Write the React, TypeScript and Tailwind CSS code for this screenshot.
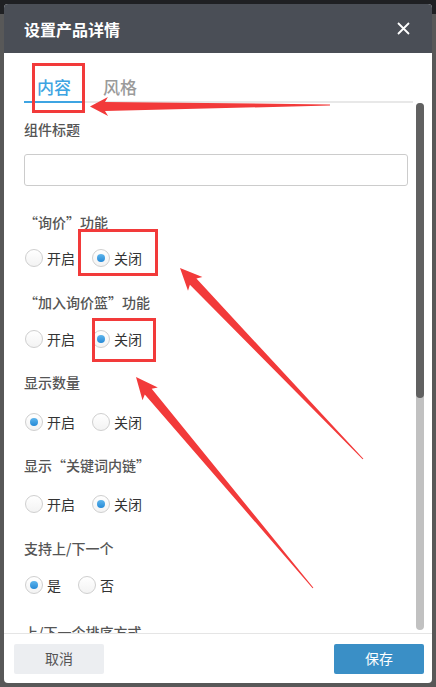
import React from "react";

type Pt = [number, number];

function arrowPoints(tip: Pt, tail: Pt, headLen: number, headHalf: number, neckHalf: number, tailHalf: number): string {
  const dx = tail[0] - tip[0];
  const dy = tail[1] - tip[1];
  const len = Math.hypot(dx, dy);
  const ux = dx / len;
  const uy = dy / len;
  const nx = -uy;
  const ny = ux;
  const base: Pt = [tip[0] + ux * headLen, tip[1] + uy * headLen];
  const neck: Pt = [tip[0] + ux * (headLen - 3), tip[1] + uy * (headLen - 3)];
  const pts: Pt[] = [
    tip,
    [base[0] + nx * headHalf, base[1] + ny * headHalf],
    [neck[0] + nx * neckHalf, neck[1] + ny * neckHalf],
    [tail[0] + nx * tailHalf, tail[1] + ny * tailHalf],
    [tail[0] - nx * tailHalf, tail[1] - ny * tailHalf],
    [neck[0] - nx * neckHalf, neck[1] - ny * neckHalf],
    [base[0] - nx * headHalf, base[1] - ny * headHalf],
  ];
  return pts.map((p) => `${p[0].toFixed(1)},${p[1].toFixed(1)}`).join(" ");
}

function Radio({ checked, label }: { checked: boolean; label: string }) {
  return (
    <div className="flex items-center gap-[4px]">
      <span className="flex h-[18px] w-[18px] items-center justify-center rounded-full border border-[#cfcfcf] bg-gradient-to-b from-[#ffffff] to-[#f3f3f3]">
        {checked && <span className="block h-[8px] w-[8px] rounded-full bg-gradient-to-b from-[#5db5ec] to-[#2389d6]" />}
      </span>
      <span className="text-[14px] leading-5 text-[#333]">{label}</span>
    </div>
  );
}

type Section = {
  label: string;
  top: string;
  gap: string;
  options: { label: string; checked: boolean }[];
};

const sections: Section[] = [
  { label: "“询价”功能", top: "mt-[26px]", gap: "mt-[16px]", options: [{ label: "开启", checked: false }, { label: "关闭", checked: true }] },
  { label: "“加入询价篮”功能", top: "mt-[24px]", gap: "mt-[17px]", options: [{ label: "开启", checked: false }, { label: "关闭", checked: true }] },
  { label: "显示数量", top: "mt-[23px]", gap: "mt-[20px]", options: [{ label: "开启", checked: true }, { label: "关闭", checked: false }] },
  { label: "显示“关键词内链”", top: "mt-[23px]", gap: "mt-[19px]", options: [{ label: "开启", checked: false }, { label: "关闭", checked: true }] },
  { label: "支持上/下一个", top: "mt-[24px]", gap: "mt-[17px]", options: [{ label: "是", checked: true }, { label: "否", checked: false }] },
];

export default function App() {
  const font = { fontFamily: '"Noto Sans CJK SC", "Liberation Sans", sans-serif' };
  return (
    <div className="relative h-[687px] w-[436px] overflow-hidden bg-[#585858]" style={font}>
      <div className="h-[14px] bg-[#1f2023]" />
      {/* dialog window */}
      <div className="absolute left-[4px] top-[4px] flex h-[679px] w-[428px] flex-col overflow-hidden rounded-[4px] bg-white">
        <div className="flex h-[49px] shrink-0 items-center justify-between bg-[#4a4e56] pl-[20px] pr-[22px]">
          <span className="text-[16px] font-bold text-white">设置产品详情</span>
          <svg width="13" height="13" viewBox="0 0 13 13">
            <path d="M1 1 L12 12 M12 1 L1 12" stroke="#fff" strokeWidth="1.8" />
          </svg>
        </div>
        <div className="relative flex-1 overflow-hidden">
          <div className="pl-[20px] pt-[20px]">
            <div className="flex w-[389px] border-b-2 border-[#e8e8e8]">
              <div className="-mb-[2px] h-[30px] border-b-2 border-[#3ea4e2] px-[13px] text-[17px] font-medium leading-[28px] text-[#3ea4e2]">内容</div>
              <div className="ml-[6px] h-[28px] px-[13px] text-[17px] font-medium leading-[28px] text-[#9a9a9a]">风格</div>
            </div>
            <div className="mt-[16px] h-5 text-[14px] font-medium leading-5 text-[#555]">组件标题</div>
            <div className="mt-[15px] h-[32px] w-[384px] rounded-[3px] border border-[#cccccc]" />
            {sections.map((s) => (
              <div key={s.label} className={s.top}>
                <div className="h-5 text-[14px] font-medium leading-5 text-[#555]">{s.label}</div>
                <div className={`${s.gap} flex h-5 items-center gap-[17px] pl-[1px]`}>
                  {s.options.map((o) => (
                    <Radio key={o.label} checked={o.checked} label={o.label} />
                  ))}
                </div>
              </div>
            ))}
            <div className="mt-[27px] h-5 text-[14px] font-medium leading-5 text-[#555]">上/下一个排序方式</div>
          </div>
          {/* scrollbar */}
          <div className="absolute left-[412px] top-[50px] h-[527px] w-[8px] rounded-full bg-[#c1c1c1]">
            <div className="h-[295px] w-[8px] rounded-full bg-[#616161]" />
          </div>
        </div>
        <div className="flex h-[50px] shrink-0 items-center justify-between border-t border-[#e5e5e5] pl-[10px] pr-[8px]">
          <button className="h-[30px] w-[90px] rounded-[2px] bg-[#eceef1] text-[14px] text-[#555]">取消</button>
          <button className="h-[30px] w-[90px] rounded-[2px] bg-[#3a8fc6] text-[14px] text-white">保存</button>
        </div>
      </div>
      {/* annotation boxes */}
      <div className="absolute left-[32px] top-[63px] h-[50px] w-[53px] border-[3px] border-[#f23a3a]" />
      <div className="absolute left-[78px] top-[229px] h-[47px] w-[80px] border-[3px] border-[#f23a3a]" />
      <div className="absolute left-[92px] top-[318px] h-[44px] w-[64px] border-[3px] border-[#f23a3a]" />
      <svg className="absolute left-0 top-0" width="436" height="687" viewBox="0 0 436 687">
        <polygon points={arrowPoints([90, 106.5], [330, 105], 18, 9.5, 4.5, 0.6)} fill="#f23a3a" />
        <polygon points={arrowPoints([180, 268], [363, 459], 22, 10, 4.5, 0.5)} fill="#f23a3a" />
        <polygon points={arrowPoints([136, 377], [313, 588], 22, 10, 4.5, 0.5)} fill="#f23a3a" />
      </svg>
    </div>
  );
}
